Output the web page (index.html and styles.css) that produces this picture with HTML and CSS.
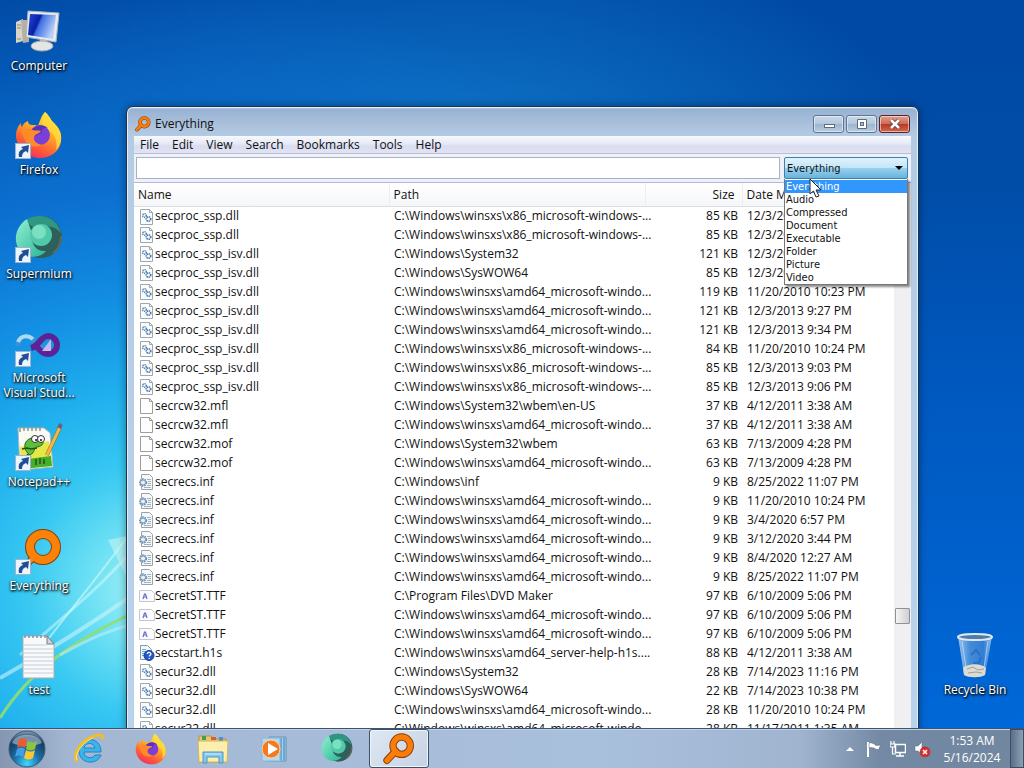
FILE: index.html
```
<!DOCTYPE html>
<html lang="en">
<head>
    <meta charset="UTF-8">
    <title>Everything</title>
    <link rel="stylesheet" href="styles.css">
</head>
<body>
    <!-- Shared icons -->
    <svg class="defs" width="0" height="0" aria-hidden="true">
        <defs>
            <linearGradient id="foxBody" x1="0.8" y1="0" x2="0.3" y2="1">
                <stop offset="0" stop-color="#fff04a"/>
                <stop offset="0.4" stop-color="#ffae28"/>
                <stop offset="0.75" stop-color="#ff5b36"/>
                <stop offset="1" stop-color="#f02d68"/>
            </linearGradient>
            <linearGradient id="teal" x1="0" y1="0" x2="1" y2="1">
                <stop offset="0" stop-color="#8ff0cf"/>
                <stop offset="1" stop-color="#2cb598"/>
            </linearGradient>
            <linearGradient id="screen" x1="0" y1="0" x2="1" y2="0.4">
                <stop offset="0" stop-color="#2448d8"/>
                <stop offset="0.42" stop-color="#0b1fa6"/>
                <stop offset="0.5" stop-color="#3f6fe4"/>
                <stop offset="1" stop-color="#b8d0f8"/>
            </linearGradient>
            <radialGradient id="orb" cx="0.5" cy="0.9" r="0.9">
                <stop offset="0" stop-color="#3fd8ff"/>
                <stop offset="0.4" stop-color="#1c6fa8"/>
                <stop offset="0.8" stop-color="#17385c"/>
                <stop offset="1" stop-color="#8fa9c0"/>
            </radialGradient>
            <linearGradient id="glass" x1="0" y1="0" x2="1" y2="0">
                <stop offset="0" stop-color="#b5d4f0"/>
                <stop offset="0.35" stop-color="#4f93da"/>
                <stop offset="0.75" stop-color="#3a82d6"/>
                <stop offset="1" stop-color="#a9cff0"/>
            </linearGradient>
        </defs>
        <symbol id="firefox" viewBox="0 0 48 48">
            <path d="M30 1c5 4 6 9 9 11 5 5 8 10 7 18-1 10-10 17-21 17C12 47 2 38 1 25c0-6 2-10 5-13 0 2 0 3 1 4 1-3 3-5 6-6 0 3 2 4 5 4 2 0 4 0 5 1 2-5 3-10 7-14z" fill="url(#foxBody)"/>
            <path d="M30 1c5 4 6 9 9 11 5 5 8 10 7 18-1 4-3 7-5 9 2-9-1-16-8-20-5-3-8-6-3-18z" fill="#ffdc3c" opacity=".8"/>
            <circle cx="25" cy="24" r="10" fill="#7a3fd6"/>
            <path d="M15 20c4-5 12-8 18-3-5-1-7 2-6 5-3 0-4 3-7 3-2 0-4-2-5-5z" fill="#5a32b8"/>
            <path d="M6 20c4-4 8-3 12-1 2 1 5 0 8 1-2 3-6 3-7 6-1 4 3 7 8 8-8 4-16 0-18-7z" fill="#ff8a2a"/>
        </symbol>
        <symbol id="supermium" viewBox="0 0 48 48">
            <circle cx="26" cy="22" r="21" fill="#2f5f5a"/>
            <path d="M10 6C17 0 30-1 39 6c4 4 6 8 7 12-6-7-14-8-21-5-4 2-6 0-15-7z" fill="#2f9682"/>
            <path d="M12 4C4 9 0 18 1 26c1 8 6 13 12 15 7 2 14 0 18-5-9 1-14-6-14-13 0-8-3-12-5-19z" fill="url(#teal)"/>
            <circle cx="26" cy="20" r="11" fill="#4fc9a8"/>
            <circle cx="24" cy="17" r="7" fill="#8feacd" opacity=".7"/>
            <path d="M38 38c6-4 8-10 8-17" fill="none" stroke="#5d6a58" stroke-width="2"/>
        </symbol>
        <symbol id="magnifier" viewBox="0 0 48 48">
            <path d="M19 27L6 41" stroke="#8a3d08" stroke-width="11" stroke-linecap="round"/>
            <circle cx="28" cy="19" r="13" fill="none" stroke="#8a3d08" stroke-width="11"/>
            <path d="M19 27L6 41" stroke="#fb7d09" stroke-width="8" stroke-linecap="round"/>
            <circle cx="28" cy="19" r="13" fill="none" stroke="#fb7d09" stroke-width="8"/>
        </symbol>
        <symbol id="shortcut" viewBox="0 0 16 16">
            <rect x="0.5" y="0.5" width="15" height="15" fill="#eef4fb" stroke="#9db4cc"/>
            <path d="M4 14c-1-5 1-7 4-8L6 4l8-2-1 8-2-2c-3 1-4 3-4 6z" fill="#1f4f97"/>
        </symbol>
        <symbol id="file-dll" viewBox="0 0 16 16">
            <path d="M1.5 0.5h9l3 3v12h-12z" fill="#fafcfd" stroke="#a0a8af"/>
            <path d="M10.5 0.5v3h3" fill="none" stroke="#a0a8af"/>
            <circle cx="5.5" cy="6.500" r="1.800" fill="none" stroke="#5583b0" stroke-width="1.600" stroke-dasharray="1.200 .7"/>
            <circle cx="9.500" cy="10" r="2.200" fill="none" stroke="#4977a8" stroke-width="1.700" stroke-dasharray="1.200 .7"/>
        </symbol>
        <symbol id="file-blank" viewBox="0 0 16 16">
            <path d="M1.5 0.5h9l3 3v12h-12z" fill="#fefdfd" stroke="#9f9c9c"/>
            <path d="M10.5 0.5v3h3" fill="none" stroke="#9f9c9c"/>
        </symbol>
        <symbol id="file-inf" viewBox="0 0 16 16">
            <path d="M2.5 0.5h8l3 3v12h-11z" fill="#f4f8fa" stroke="#9aa3aa"/>
            <path d="M8 5.500h4M9 7.500h3M9 9.500h3M8 11.500h4M5 13.500h7" stroke="#a3b2c0"/>
            <circle cx="4" cy="8.500" r="3.200" fill="#e8f1f8" stroke="#6f90ae" stroke-width="2" stroke-dasharray="1.500 .8"/>
            <circle cx="4" cy="8.500" r="2.500" fill="none" stroke="#7f9fbb"/>
        </symbol>
        <symbol id="file-ttf" viewBox="0 0 16 16">
            <path d="M0.5 2.500h12l3 3v8h-15z" fill="#fbfbfe" stroke="#c3c6ce"/>
            <path d="M4 11l1.500-5h1L8 11M5 9h2" fill="none" stroke="#6a6ec8" stroke-width="1.200"/>
        </symbol>
        <symbol id="file-h1s" viewBox="0 0 16 16">
            <path d="M1.5 0.5h7l4 4v10h-11z" fill="#f2f8fc" stroke="#7f9aaa"/>
            <path d="M3 4.500h4M3 6.500h4M3 8.500h3M3 10.500h2" stroke="#5bb0c8"/>
            <circle cx="10" cy="10.500" r="5" fill="#2458c8" stroke="#163a90"/>
            <path d="M8.300 9c0-2.400 3.600-2.200 3.600 0 0 1.300-1.700 1.300-1.700 2.600M10.200 13v1" fill="none" stroke="#fff" stroke-width="1.300"/>
        </symbol>
    </svg>

    <div class="desktop">
        <svg class="wallpaper" viewBox="0 0 1024 728" preserveAspectRatio="none" aria-hidden="true">
            <path d="M0 678C50 650 90 625 140 590" stroke="#c8f4fb" stroke-width="4" opacity=".6" fill="none"/>
            <path d="M40 650C70 610 100 575 140 520" stroke="#d4fbf8" stroke-width="2" opacity=".6" fill="none"/>
            <path d="M20 655C70 610 100 590 150 530" stroke="#d8fbf8" stroke-width="3" opacity=".5" fill="none"/>
            <path d="M0 718C30 670 75 640 135 612" stroke="#8fdf6e" stroke-width="3" opacity=".9" fill="none"/>
            <path d="M60 655C90 638 110 630 140 622" stroke="#bdf0f4" stroke-width="3" opacity=".6" fill="none"/>
            <path d="M108 540l18-4v40z" fill="#d0f8f6" opacity=".5"/>
        </svg>

        <nav class="shortcuts" aria-label="Desktop">
            <a class="shortcut" href="#">
                <svg class="shortcut-icon" viewBox="0 0 48 48">
                    <path d="M1 15l7-3v22l-7 2z" fill="#d8d4c8"/>
                    <path d="M6 13h8v22l-6 1z" fill="#b3b0a4"/>
                    <path d="M2 18h4M2 21h4M2 32h4" stroke="#8c8a80"/>
                    <path d="M13 4l31 2-3 29-30-5z" fill="#e8ebee" stroke="#a9b3bc"/>
                    <path d="M15 7l26 1-3 24-25-4z" fill="url(#screen)"/>
                    <path d="M25 32l6 1v6h-7z" fill="#c3c6c8"/>
                    <ellipse cx="27" cy="39" rx="11" ry="5" fill="#e4e6e6" stroke="#a6a8a8"/>
                </svg>
                <span>Computer</span>
            </a>
            <a class="shortcut" href="#">
                <svg class="shortcut-icon"><use href="#firefox"/></svg>
                <svg class="shortcut-arrow"><use href="#shortcut"/></svg>
                <span>Firefox</span>
            </a>
            <a class="shortcut" href="#">
                <svg class="shortcut-icon"><use href="#supermium"/></svg>
                <svg class="shortcut-arrow"><use href="#shortcut"/></svg>
                <span>Supermium</span>
            </a>
            <a class="shortcut" href="#">
                <svg class="shortcut-icon" viewBox="0 0 48 48">
                    <path d="M3 27c0-9 8-12 14-7 5 4 8 10 14 12" fill="none" stroke="#3f8ed8" stroke-width="5"/>
                    <path d="M3 23c3-7 10-7 15-3" fill="none" stroke="#a5def2" stroke-width="4"/>
                    <path d="M16 29c8-2 10-12 17-12a9 9 0 1 1 0 18c-5 0-8-3-11-7" fill="none" stroke="#5b2396" stroke-width="6"/>
                    <path d="M36 20v12h-9z" fill="#c9b8ec"/>
                </svg>
                <svg class="shortcut-arrow"><use href="#shortcut"/></svg>
                <span>Microsoft Visual Stud...</span>
            </a>
            <a class="shortcut" href="#">
                <svg class="shortcut-icon" viewBox="0 0 48 48">
                    <path d="M3 5h26l6 5 3 34-33 3z" fill="#fbfbf6" stroke="#b5b8b0"/>
                    <path d="M5 24l29-6 3 25-31 3z" fill="#e6e84a"/>
                    <path d="M5 37l31-4 1 10-31 3z" fill="#43b02a"/>
                    <path d="M5 5v4M9 4v4M13 4v4M17 4v4M21 4v4M25 4v4" stroke="#8c9690" stroke-width="1.500"/>
                    <path d="M10 21c2-6 9-8 16-5 4 3 2 7-4 8-3 0-2 6-7 8-3-2-6-6-5-11z" fill="#5cc03c" stroke="#286d1c"/>
                    <circle cx="20" cy="16" r="3.500" fill="#fff" stroke="#333"/>
                    <circle cx="26" cy="16" r="3.500" fill="#fff" stroke="#333"/>
                    <circle cx="21" cy="17" r="1" fill="#111"/>
                    <circle cx="26" cy="17" r="1" fill="#111"/>
                    <path d="M7 26l5-1 4 1 6-1M12 31l4 3M21 36v6M25 35v6M29 36v5" stroke="#2f4d18" stroke-width="1.500" fill="none"/>
                    <path d="M45 4L32 32" stroke="#8a6420" stroke-width="4"/>
                    <path d="M45 4L32 32" stroke="#f0b840" stroke-width="3"/>
                    <path d="M46 1l-2 4" stroke="#64608c" stroke-width="4"/>
                </svg>
                <svg class="shortcut-arrow"><use href="#shortcut"/></svg>
                <span>Notepad++</span>
            </a>
            <a class="shortcut" href="#">
                <svg class="shortcut-icon" viewBox="0 0 48 48">
                    <path d="M18 31L6 43" stroke="#8a3d08" stroke-width="7" stroke-linecap="round"/>
                    <circle cx="28" cy="20" r="13" fill="none" stroke="#8a3d08" stroke-width="10"/>
                    <path d="M18 31L6 43" stroke="#fb8209" stroke-width="5" stroke-linecap="round"/>
                    <circle cx="28" cy="20" r="13" fill="none" stroke="#fb8209" stroke-width="8"/>
                </svg>
                <svg class="shortcut-arrow"><use href="#shortcut"/></svg>
                <span>Everything</span>
            </a>
            <a class="shortcut" href="#">
                <svg class="shortcut-icon" viewBox="0 0 48 48">
                    <path d="M8 5h24l7 8v34H8z" fill="#f8f9fa" stroke="#a9adb3"/>
                    <path d="M9 14h23M9 18h29M9 22h29M9 26h29M9 30h29M9 34h29M9 38h29M9 42h29" stroke="#c5ced8"/>
                    <path d="M32 5v8h7z" fill="#d3d6da" stroke="#777b80"/>
                    <path d="M10 4v3M14 4v3M18 4v3M22 4v3M26 4v3M30 4v3" stroke="#8e9398" stroke-width="1.500"/>
                </svg>
                <span>test</span>
            </a>
        </nav>

        <a class="shortcut recycle-bin" href="#">
            <svg class="shortcut-icon" viewBox="0 0 48 48">
                <path d="M7 5l6 39c5 3 17 3 21 0l7-39z" fill="url(#glass)" opacity=".85"/>
                <path d="M12 37c5-5 18-5 23 0l-1 7c-5 3-16 3-21 0z" fill="#dcdcd2"/>
                <path d="M16 38l6-2 5 3 6-1M17 42l8-1 6 1" stroke="#a19f92" fill="none"/>
                <path d="M11 10l4 27M37 10l-4 27" stroke="#c5e0f6" fill="none" opacity=".7"/>
                <path d="M20 24l5-5 4 5M30 26l-2 6h-6" stroke="#2260b8" stroke-width="2" fill="none" opacity=".6"/>
                <ellipse cx="24" cy="6" rx="17" ry="3" fill="#4f7ca8" stroke="#dfe9f2" stroke-width="2"/>
            </svg>
            <span>Recycle Bin</span>
        </a>

        <main class="window">
            <header class="title-bar">
                <svg class="title-icon"><use href="#magnifier"/></svg>
                <h1>Everything</h1>
                <div class="window-buttons">
                    <button aria-label="Minimize"><svg viewBox="0 0 16 12"><rect x="3.500" y="6.500" width="10" height="3" fill="#fff" stroke="#5a6d82"/></svg></button>
                    <button aria-label="Maximize"><svg viewBox="0 0 16 12"><path d="M3.500 1.500h9v9h-9z" fill="#fff" stroke="#5a6d82"/><rect x="6.500" y="4.500" width="3" height="3" fill="#a9bed2" stroke="#5a6d82"/></svg></button>
                    <button class="close" aria-label="Close"><svg viewBox="0 0 16 12"><path d="M4 2l8 8M12 2l-8 8" stroke="#6a3a3c" stroke-width="4"/><path d="M4 2l8 8M12 2l-8 8" stroke="#fff" stroke-width="2.500"/></svg></button>
                </div>
            </header>

            <div class="client">
                <nav class="menu-bar">
                    <button>File</button>
                    <button>Edit</button>
                    <button>View</button>
                    <button>Search</button>
                    <button>Bookmarks</button>
                    <button>Tools</button>
                    <button>Help</button>
                </nav>

                <div class="search-bar">
                    <input type="text" class="search-input" aria-label="Search">
                    <div class="filter">
                        <select aria-label="Filter">
                            <option>Everything</option>
                            <option>Audio</option>
                            <option>Compressed</option>
                            <option>Document</option>
                            <option>Executable</option>
                            <option>Folder</option>
                            <option>Picture</option>
                            <option>Video</option>
                        </select>
                        <ul class="filter-list" role="listbox" aria-label="Filter list">
                            <li class="selected" role="option" aria-selected="true">Everything</li>
                            <li role="option">Audio</li>
                            <li role="option">Compressed</li>
                            <li role="option">Document</li>
                            <li role="option">Executable</li>
                            <li role="option">Folder</li>
                            <li role="option">Picture</li>
                            <li role="option">Video</li>
                        </ul>
                        <svg class="cursor" viewBox="0 0 13 20" aria-hidden="true"><path d="M1 1v15l3.500-3 2.500 6 3-1-3-6h5z" fill="#fff" stroke="#222"/></svg>
                    </div>
                </div>

                <div class="results">
                    <table>
                        <colgroup>
                            <col class="col-name">
                            <col class="col-path">
                            <col class="col-size">
                            <col>
                        </colgroup>
                        <thead>
                            <tr><th>Name</th><th>Path</th><th class="size">Size</th><th>Date Modified</th></tr>
                        </thead>
                        <tbody id="rows"></tbody>
                    </table>
                    <div class="scrollbar"><div class="scroll-thumb"></div></div>
                </div>
            </div>
        </main>
    </div>

    <footer class="taskbar">
        <button class="start" aria-label="Start">
            <svg viewBox="0 0 40 40">
                <circle cx="20" cy="20" r="18" fill="url(#orb)" stroke="#3c5a78"/>
                <path d="M5 14C9 3 31 3 35 14c-8 4-22 4-30 0z" fill="#d5e4f0" opacity=".5"/>
                <path d="M12 11c3-2 5-2 8 0l-2 8c-3-2-5-2-8 0z" fill="#f0592a"/>
                <path d="M21 12c3 2 6 2 9 0l-2 8c-3 2-6 2-9 0z" fill="#8cc63e"/>
                <path d="M10 20c3-2 5-2 8 0l-2 8c-3-2-5-2-8 0z" fill="#3fa0e8"/>
                <path d="M19 21c3 2 6 2 9 0l-2 8c-3 2-6 2-9 0z" fill="#fcc82e"/>
            </svg>
        </button>
        <button class="task" aria-label="Internet Explorer">
            <svg viewBox="0 0 32 32">
                <path d="M28 19H11c0 7 9 7 11 3h6c-4 11-22 9-22-4C6 3 28 2 28 19zM11 15h11c-1-6-10-6-11 0z" fill="#3cb4ea" stroke="#1f84c4"/>
                <path d="M5 28C-2 25 6 9 19 4c6-3 11-3 11 2" fill="none" stroke="#f5bd20" stroke-width="3"/>
                <path d="M4 27C1 23 8 10 20 5" fill="none" stroke="#fbe88a"/>
            </svg>
        </button>
        <button class="task" aria-label="Firefox"><svg><use href="#firefox"/></svg></button>
        <button class="task" aria-label="Windows Explorer">
            <svg viewBox="0 0 32 32">
                <path d="M2 3h12l2 3h13v23H2z" fill="#e9c866" stroke="#b8953a"/>
                <path d="M5 3h4v4H5z" fill="#3da05c"/>
                <path d="M14 4h5v3h-5z" fill="#d65a48"/>
                <path d="M22 4h4v4h-4z" fill="#4d8fd0"/>
                <path d="M1 8h30l-1 21H2z" fill="#fbeeae" stroke="#d4b75e"/>
                <path d="M6 30V19h20v11h-4v-6H10v6z" fill="#83c7ec" stroke="#4c97c8"/>
                <path d="M8 21h16" stroke="#d6f0fc"/>
            </svg>
        </button>
        <button class="task" aria-label="Windows Media Player">
            <svg viewBox="0 0 32 32">
                <path d="M10 4h17v24H10z" fill="#a9cdea" stroke="#5a96c0"/>
                <path d="M22 5v22M25 5v22" stroke="#3a80b4"/>
                <path d="M3 5h18v23H3z" fill="#b5d8ef" stroke="#8ab4d2"/>
                <circle cx="12" cy="16" r="9" fill="#f37a1e" stroke="#fbd0a0"/>
                <path d="M9 10l10 6-10 6z" fill="#fff"/>
            </svg>
        </button>
        <button class="task" aria-label="Supermium"><svg><use href="#supermium"/></svg></button>
        <button class="task active" aria-label="Everything"><svg><use href="#magnifier"/></svg></button>

        <div class="tray">
            <button aria-label="Show hidden icons"><svg viewBox="0 0 16 16"><path d="M4 10h8L8 6z" fill="#fff"/></svg></button>
            <button aria-label="Action Center"><svg viewBox="0 0 16 16"><path d="M2 1v15" stroke="#fff" stroke-width="2"/><path d="M3 2c3-1 4 1 6 1v1c2 1 4 0 6 0l-2 3 1 1c-3 1-5 0-6-1-2 0-3-1-5 0z" fill="#fff" stroke="#4a5c70" stroke-width=".5"/></svg></button>
            <button aria-label="Network"><svg viewBox="0 0 16 16"><path d="M5.500 3.500h10v8h-10z" fill="#6a8098" stroke="#fff" stroke-width="1.500"/><path d="M10 12v3M6 15h8" stroke="#fff" stroke-width="1.500"/><path d="M1 0v3M4 0v3M0 3h5v3H0zM2.500 6v7H6" fill="none" stroke="#fff" stroke-width="1.200"/></svg></button>
            <button aria-label="Volume muted"><svg viewBox="0 0 16 16"><path d="M1 5h3l4-4v13L4 10H1z" fill="#fff" stroke="#56687c" stroke-width=".5"/><circle cx="11" cy="11" r="5" fill="#dc2f2a" stroke="#9d1a16" stroke-width=".5"/><path d="M9 9l4 4M13 9l-4 4" stroke="#fff" stroke-width="1.500"/></svg></button>
            <div class="clock"><span>1:53 AM</span><span>5/16/2024</span></div>
            <button class="show-desktop" aria-label="Show desktop"></button>
        </div>
    </footer>

    <script>
        const AMD = 'C:\\Windows\\winsxs\\amd64_microsoft-windo...';
        const X86 = 'C:\\Windows\\winsxs\\x86_microsoft-windows-...';
        const SYS32 = 'C:\\Windows\\System32';
        const WOW64 = 'C:\\Windows\\SysWOW64';

        // name, path, size in KB, date modified
        const files = [
            ['secproc_ssp.dll', X86, 85, '12/3/2013 9:03 PM'],
            ['secproc_ssp.dll', X86, 85, '12/3/2013 9:06 PM'],
            ['secproc_ssp_isv.dll', SYS32, 121, '12/3/2013 9:34 PM'],
            ['secproc_ssp_isv.dll', WOW64, 85, '12/3/2013 9:06 PM'],
            ['secproc_ssp_isv.dll', AMD, 119, '11/20/2010 10:23 PM'],
            ['secproc_ssp_isv.dll', AMD, 121, '12/3/2013 9:27 PM'],
            ['secproc_ssp_isv.dll', AMD, 121, '12/3/2013 9:34 PM'],
            ['secproc_ssp_isv.dll', X86, 84, '11/20/2010 10:24 PM'],
            ['secproc_ssp_isv.dll', X86, 85, '12/3/2013 9:03 PM'],
            ['secproc_ssp_isv.dll', X86, 85, '12/3/2013 9:06 PM'],
            ['secrcw32.mfl', 'C:\\Windows\\System32\\wbem\\en-US', 37, '4/12/2011 3:38 AM'],
            ['secrcw32.mfl', AMD, 37, '4/12/2011 3:38 AM'],
            ['secrcw32.mof', 'C:\\Windows\\System32\\wbem', 63, '7/13/2009 4:28 PM'],
            ['secrcw32.mof', AMD, 63, '7/13/2009 4:28 PM'],
            ['secrecs.inf', 'C:\\Windows\\inf', 9, '8/25/2022 11:07 PM'],
            ['secrecs.inf', AMD, 9, '11/20/2010 10:24 PM'],
            ['secrecs.inf', AMD, 9, '3/4/2020 6:57 PM'],
            ['secrecs.inf', AMD, 9, '3/12/2020 3:44 PM'],
            ['secrecs.inf', AMD, 9, '8/4/2020 12:27 AM'],
            ['secrecs.inf', AMD, 9, '8/25/2022 11:07 PM'],
            ['SecretST.TTF', 'C:\\Program Files\\DVD Maker', 97, '6/10/2009 5:06 PM'],
            ['SecretST.TTF', AMD, 97, '6/10/2009 5:06 PM'],
            ['SecretST.TTF', AMD, 97, '6/10/2009 5:06 PM'],
            ['secstart.h1s', 'C:\\Windows\\winsxs\\amd64_server-help-h1s....', 88, '4/12/2011 3:38 AM'],
            ['secur32.dll', SYS32, 28, '7/14/2023 11:16 PM'],
            ['secur32.dll', WOW64, 22, '7/14/2023 10:38 PM'],
            ['secur32.dll', AMD, 28, '11/20/2010 10:24 PM'],
            ['secur32.dll', AMD, 28, '11/17/2011 1:35 AM']
        ];

        const icons = { dll: 'dll', inf: 'inf', ttf: 'ttf', h1s: 'h1s' };

        document.getElementById('rows').innerHTML = files.map(([name, path, size, date]) => {
            const icon = icons[name.split('.').pop().toLowerCase()] || 'blank';
            return `<tr>
                <td><svg class="file-icon"><use href="#file-${icon}"/></svg>${name}</td>
                <td>${path}</td>
                <td class="size">${size} KB</td>
                <td>${date}</td>
            </tr>`;
        }).join('');
    </script>
</body>
</html>
```
FILE: styles.css
```
:root {
    --ui-font: "Open Sans", "Noto Sans", sans-serif;
    --text: #111;
    --glass: #b4cbe4;
    --line: #a9b1c4;
}

* {
    box-sizing: border-box;
}

body {
    margin: 0;
    height: 100vh;
    display: flex;
    flex-direction: column;
    overflow: hidden;
    font-family: var(--ui-font);
    font-size: 12px;
    color: var(--text);
}

button {
    font: inherit;
    color: inherit;
    border: none;
    background: none;
    padding: 0;
}

.defs {
    position: absolute;
}

/* Desktop */
.desktop {
    position: relative;
    flex: 1;
    min-height: 0;
    overflow: hidden;
    background:
        radial-gradient(circle 620px at 150px 590px, #a8f2f4 0%, #6ce0f4 10%, #38c8f2 20%, #20b0ee 32%, #128ee2 47%, #0c70d0 64%, rgba(8, 92, 190, 0) 100%),
        radial-gradient(ellipse 460px 240px at 460px 160px, #0f76c8 0%, rgba(4, 87, 185, 0) 100%),
        linear-gradient(to bottom, #0049a4 0%, #004da8 25%, #0059c0 55%, #0068d8 100%);
}

.wallpaper {
    position: absolute;
    width: 100%;
    height: 100%;
}

.shortcuts {
    position: relative;
    width: 78px;
}

.shortcut {
    position: relative;
    display: flex;
    flex-direction: column;
    align-items: center;
    width: 78px;
    height: 104px;
    padding-top: 7px;
    gap: 3px;
    color: #fff;
    line-height: 15px;
    text-align: center;
    text-decoration: none;
    text-shadow: 1px 1px 2px #000, 0 1px 3px #000;
}

.shortcut-icon {
    width: 48px;
    height: 48px;
}

.shortcut-arrow {
    position: absolute;
    left: 15px;
    top: 39px;
    width: 16px;
    height: 16px;
}

.recycle-bin {
    position: absolute;
    right: 10px;
    bottom: 0;
}

/* Window */
.window {
    position: absolute;
    top: 106px;
    right: 105px;
    bottom: -30px;
    left: 126px;
    display: flex;
    flex-direction: column;
    padding: 0 7px;
    border: 1px solid #1d3450;
    border-radius: 7px;
    background: linear-gradient(to bottom, #e8f1fa 0, #97b2d2 2px, #a9bfdb 16px, var(--glass) 30px, #b9d3ec 100%);
    box-shadow: inset 0 0 0 1px #e3eff9, 0 0 8px rgba(0, 0, 0, 0.4);
}

.title-bar {
    display: flex;
    align-items: center;
    height: 29px;
    padding: 4px 1px 0;
    gap: 4px;
}

.title-icon {
    width: 16px;
    height: 16px;
}

h1 {
    flex: 1;
    margin: 0;
    font-size: 12px;
    font-weight: normal;
}

.window-buttons {
    display: flex;
    gap: 2px;
}

.window-buttons button {
    display: flex;
    align-items: center;
    justify-content: center;
    width: 31px;
    height: 18px;
    border: 1px solid #5d7591;
    border-radius: 3px;
    background: linear-gradient(to bottom, #c8d8e8 0%, #b5c9dd 48%, #9db5cf 52%, #b8cde0 100%);
    box-shadow: inset 0 0 0 1px rgba(255, 255, 255, 0.5);
}

.window-buttons svg {
    width: 16px;
    height: 12px;
}

.window-buttons .close {
    border-color: #5e2026;
    background: linear-gradient(to bottom, #e0a090 0%, #cf6a56 48%, #b93a25 52%, #d06a4c 100%);
}

.client {
    flex: 1;
    min-height: 0;
    display: flex;
    flex-direction: column;
    background: #fff;
}

.menu-bar {
    display: flex;
    gap: 13px;
    height: 18px;
    padding: 0 6px;
    border-bottom: 1px solid #b9bed0;
    background: linear-gradient(to bottom, #f8f9fd 0%, #e6e9f6 45%, #d9dcef 60%, #e2e4f3 100%);
}

.search-bar {
    display: flex;
    gap: 4px;
    height: 29px;
    padding: 3px 3px 3px 2px;
    border-bottom: 1px solid #b5b8d4;
    background: #eef0fa;
}

.search-input {
    flex: 1;
    min-width: 0;
    border: 1px solid var(--line);
    background: #fff;
    font: inherit;
}

.filter {
    position: relative;
    width: 124px;
}

.filter select {
    appearance: none;
    width: 100%;
    height: 22px;
    padding: 0 2px;
    border: 1px solid #3c7fb1;
    border-radius: 2px;
    font: 11px "DejaVu Sans Condensed", sans-serif;
    color: var(--text);
    background: linear-gradient(to bottom, #e0f3fc 0%, #c4e5f6 48%, #98d1ef 52%, #68b3db 100%);
}

.filter::after {
    content: "";
    position: absolute;
    top: 9px;
    right: 5px;
    border: 4px solid transparent;
    border-top-color: #000;
}

.filter-list {
    position: absolute;
    z-index: 2;
    top: 22px;
    left: 0;
    width: 100%;
    margin: 0;
    padding: 1px 0 0;
    border: 1px solid #777;
    border-top: none;
    background: #fff;
    box-shadow: 2px 2px 2px rgba(0, 0, 0, 0.45);
    font: 11px/13px "DejaVu Sans Condensed", sans-serif;
    list-style: none;
}

.filter-list li {
    padding-left: 1px;
}

.filter-list .selected {
    background: #3197fd;
    color: #fff;
}

.cursor {
    position: absolute;
    z-index: 3;
    top: 21px;
    left: 25px;
    width: 13px;
    height: 20px;
}

/* File list */
.results {
    flex: 1;
    min-height: 0;
    display: flex;
    overflow: hidden;
}

table {
    flex: 1;
    width: 100%;
    height: 0;
    table-layout: fixed;
    border-collapse: collapse;
}

.col-name {
    width: 255px;
}

.col-path {
    width: 256px;
}

.col-size {
    width: 97px;
}

th {
    height: 23px;
    padding: 0 4px;
    border-right: 1px solid #eceef2;
    border-bottom: 1px solid #dcdee3;
    background: linear-gradient(to bottom, #fff 0%, #f5f6f8 100%);
    font-weight: normal;
    text-align: left;
}

td {
    height: 19px;
    padding: 0 5px;
    line-height: 17px;
    white-space: nowrap;
}

th.size {
    padding-right: 7px;
    text-align: right;
}

td.size {
    padding-right: 4px;
    text-align: right;
}

.file-icon {
    width: 16px;
    height: 16px;
    vertical-align: middle;
}

.scrollbar {
    width: 17px;
    padding: 0 1px;
    background: #f0f0f2;
}

.scroll-thumb {
    height: 16px;
    margin-top: 425px;
    border: 1px solid #8f9196;
    border-radius: 1px;
    background: linear-gradient(to right, #f4f4f4 0%, #e2e2e4 50%, #cfcfd3 100%);
}

/* Taskbar */
.taskbar {
    position: relative;
    display: flex;
    gap: 2px;
    height: 40px;
    border-top: 1px solid #3c5270;
    background: linear-gradient(to right, #8496b0 0, #a3b7d3 70px, #a9c0dd 600px, #a0b4cf 800px, #7389a4 880px, #71869f 100%);
    box-shadow: inset 0 1px 0 #c3d2e4;
}

.taskbar svg {
    display: block;
}

.start {
    width: 57px;
    padding-left: 7px;
}

.start svg {
    width: 40px;
    height: 40px;
}

.task {
    display: flex;
    align-items: center;
    justify-content: center;
    width: 60px;
}

.task svg {
    width: 32px;
    height: 32px;
}

.task.active {
    border: 1px solid #3d5069;
    border-radius: 3px;
    background: linear-gradient(135deg, #dfe8f3 0%, #c5d2e4 100%);
    box-shadow: inset 0 0 0 1px #f0f5fa;
}

.tray {
    display: flex;
    align-items: center;
    margin-left: auto;
    color: #fff;
}

.tray button {
    display: flex;
    align-items: center;
    justify-content: center;
    width: 24px;
    height: 100%;
}

.tray svg {
    width: 16px;
    height: 16px;
}

.clock {
    display: flex;
    flex-direction: column;
    width: 76px;
    line-height: 17px;
    text-align: center;
}

.tray .show-desktop {
    width: 14px;
    border: 1px solid #3b4d62;
    background: linear-gradient(to right, #5a6f88 0%, #8ca0b5 100%);
}
```
